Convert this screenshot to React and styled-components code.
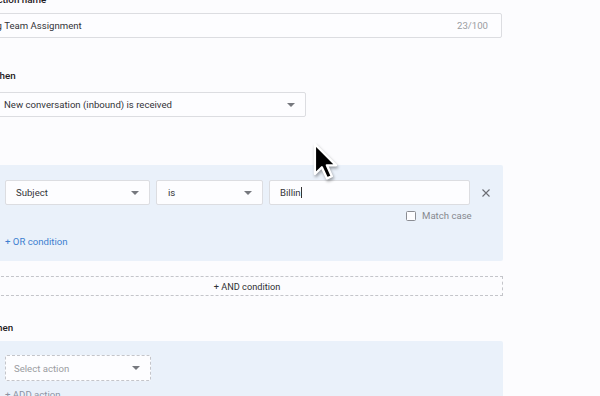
import React from "react";
import styled, { createGlobalStyle } from "styled-components";

const GlobalStyle = createGlobalStyle`
  html, body { margin: 0; padding: 0; }
  body {
    background: #fcfcfe;
    font-family: Roboto, "Liberation Sans", Arial, sans-serif;
    overflow: hidden;
    width: 600px;
    height: 396px;
  }
  * { box-sizing: border-box; }
`;

const Page = styled.div`
  position: relative;
  width: 512px;
  margin-left: -9px;
  margin-top: -6px;
  display: flex;
  flex-direction: column;
  font-size: 9.6px;
  color: #2f3033;
`;

const Label = styled.div`
  font-weight: 500;
  font-size: 9.8px;
  line-height: 12px;
  color: #1f2023;
  margin-top: ${(p) => p.$mt || 0}px;
  margin-bottom: ${(p) => p.$mb || 0}px;
`;

const TextField = styled.div`
  display: flex;
  align-items: center;
  justify-content: space-between;
  height: 25px;
  margin-left: ${(p) => p.$ml || 0}px;
  width: ${(p) => p.$w}px;
  padding: 0 13px 0 10px;
  background: #fdfdff;
  border: 1px solid #dcdde1;
  border-radius: 2px;
  color: #333438;
`;

const Counter = styled.span`
  color: #9b9ca1;
`;

const Select = styled.div`
  display: flex;
  align-items: center;
  justify-content: space-between;
  height: ${(p) => p.$h || 25}px;
  width: ${(p) => p.$w}px;
  padding: 0 10px 0 ${(p) => p.$pl || 10}px;
  background: #fdfdff;
  border: 1px ${(p) => (p.$dashed ? "dashed #c4c5ca" : "solid #dcdde1")};
  border-radius: 2px;
  color: ${(p) => (p.$placeholder ? "#9b9ca1" : "#333438")};
  flex: none;
`;

const Caret = styled.span`
  width: 0;
  height: 0;
  border-left: 4px solid transparent;
  border-right: 4px solid transparent;
  border-top: 4px solid #76787e;
  flex: none;
`;

const Panel = styled.div`
  background: #eaf1fa;
  border-radius: 2px;
  padding: ${(p) => p.$pad};
  margin-top: ${(p) => p.$mt || 0}px;
  display: flex;
  flex-direction: column;
`;

const ConditionRow = styled.div`
  display: flex;
  align-items: center;
  gap: 6px;
`;

const ValueField = styled.div`
  display: flex;
  align-items: center;
  height: 25px;
  width: 201px;
  padding: 0 10px;
  background: #fdfdff;
  border: 1px solid #dcdde1;
  border-radius: 2px;
  color: #333438;
  flex: none;
`;

const TextCaret = styled.span`
  display: inline-block;
  width: 1px;
  height: 11px;
  background: #333;
  margin-left: 0.5px;
`;

const RemoveButton = styled.button`
  border: 0;
  background: none;
  padding: 0;
  margin-left: 6px;
  width: 12px;
  height: 12px;
  display: flex;
  align-items: center;
  justify-content: center;
  cursor: pointer;
`;

const MatchRow = styled.div`
  display: flex;
  align-items: center;
  gap: 6px;
  align-self: flex-start;
  margin-left: 401px;
  margin-top: 6px;
  color: #86888e;
  line-height: 10px;
`;

const Checkbox = styled.span`
  width: 10px;
  height: 10px;
  border: 1px solid #8b8d93;
  border-radius: 1.5px;
  background: #fdfdff;
`;

const LinkButton = styled.div`
  color: ${(p) => p.$color || "#3d7fd0"};
  margin-top: ${(p) => p.$mt || 0}px;
  line-height: 12px;
`;

const AndBox = styled.div`
  margin-top: 15px;
  height: 20px;
  border: 1px dashed #c4c5ca;
  display: flex;
  align-items: center;
  justify-content: center;
  color: #2f3033;
  font-size: 9.2px;
`;

const Cursor = styled.svg`
  position: absolute;
  left: 322px;
  top: 148px;
  filter: drop-shadow(1px 2px 1.5px rgba(0, 0, 0, 0.35));
`;

export default function App() {
  return (
    <>
      <GlobalStyle />
      <Page>
        <Label $mb={7}>Action name</Label>
        <TextField $ml={-26} $w={537}>
          <span>Billing Team Assignment</span>
          <Counter>23/100</Counter>
        </TextField>

        <Label $mt={32} $mb={10}>When</Label>
        <Select $w={315} $pl={12}>
          <span>New conversation (inbound) is received</span>
          <Caret />
        </Select>

        <Label $mt={26} $mb={10}>If</Label>
        <Panel $pad="15px 14px 13px">
          <ConditionRow>
            <Select $w={145}>
              <span>Subject</span>
              <Caret />
            </Select>
            <Select $w={107} $pl={11}>
              <span>is</span>
              <Caret />
            </Select>
            <ValueField>
              Billin
              <TextCaret />
            </ValueField>
            <RemoveButton aria-label="Remove condition">
              <svg width="8" height="8" viewBox="0 0 8 8">
                <path d="M0.5 0.5 L7.5 7.5 M7.5 0.5 L0.5 7.5" stroke="#6b6d73" strokeWidth="1.1" />
              </svg>
            </RemoveButton>
          </ConditionRow>
          <MatchRow>
            <Checkbox />
            <span>Match case</span>
          </MatchRow>
          <LinkButton $mt={15}>+ OR condition</LinkButton>
        </Panel>

        <AndBox>+ AND condition</AndBox>

        <Label $mt={26} $mb={7}>Then</Label>
        <Panel $pad="14px 14px 20px">
          <Select $w={146} $h={26} $pl={8} $dashed $placeholder>
            <span>Select action</span>
            <Caret />
          </Select>
          <LinkButton $mt={8} $color="#8b93a3">+ ADD action</LinkButton>
        </Panel>

        <Cursor width="25" height="39" viewBox="0 0 13 20">
          <path
            d="M1 1 L1 16.5 L4.6 13 L7.3 18.8 L9.8 17.7 L7.2 12 L12 12 Z"
            fill="#000"
            stroke="#fff"
            strokeWidth="1.2"
            strokeLinejoin="round"
          />
        </Cursor>
      </Page>
    </>
  );
}
